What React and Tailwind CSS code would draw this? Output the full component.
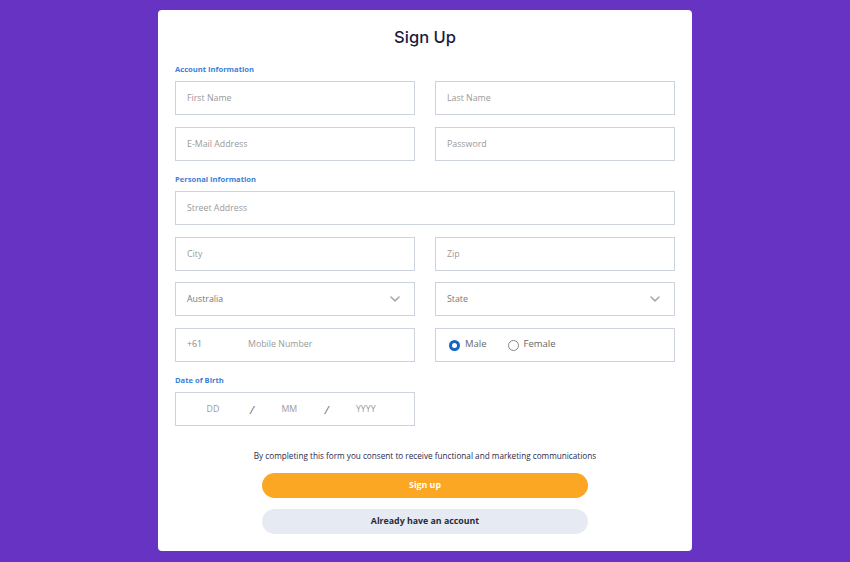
import React from 'react';

const font = { fontFamily: '"Open Sans", "Liberation Sans", sans-serif' };

const Field = ({ placeholder, className = '' }) => (
  <div className={`h-[34px] border border-[#cdd3dc] flex items-center px-[11px] pt-[1px] text-[8.8px] text-[#9a9a9a] ${className}`}>
    {placeholder}
  </div>
);

const Chevron = () => (
  <svg width="10" height="6" viewBox="0 0 10 6" className="mr-[2px]">
    <path d="M1 1 L5 4.8 L9 1" fill="none" stroke="#a5a9b0" strokeWidth="1.6" strokeLinecap="round" strokeLinejoin="round" />
  </svg>
);

const SelectField = ({ value }) => (
  <div className="h-[34px] border border-[#cdd3dc] flex items-center justify-between pl-[11px] pr-[12px] text-[8.8px] text-[#777]">
    <span className="pt-[2px]">{value}</span>
    <Chevron />
  </div>
);

const Label = ({ children, className = '' }) => (
  <div className={`text-[7.6px] font-bold text-[#3a7fd8] leading-[12px] ${className}`}>{children}</div>
);

export default function App() {
  return (
    <div className="min-h-screen bg-[#6733c3] pt-[10px] pb-[11px]" style={font}>
      <div className="w-[534px] mx-auto bg-white rounded-[4px] px-[17px] pt-[15px] pb-[17px]">
        <h1
          className="text-center text-[16.5px] leading-[24px] font-medium text-[#1c1c3c]"
          style={{ fontFamily: 'Inter, "Open Sans", sans-serif' }}
        >
          Sign Up
        </h1>

        <Label className="mt-[14px] mb-[6px]">Account Information</Label>
        <div className="grid grid-cols-2 gap-x-[20px] gap-y-[12px]">
          <Field placeholder="First Name" />
          <Field placeholder="Last Name" />
          <Field placeholder="E-Mail Address" />
          <Field placeholder="Password" />
        </div>

        <Label className="mt-[12px] mb-[6px]">Personal Information</Label>
        <Field placeholder="Street Address" />
        <div className="grid grid-cols-2 gap-x-[20px] mt-[12px]">
          <Field placeholder="City" />
          <Field placeholder="Zip" />
        </div>
        <div className="grid grid-cols-2 gap-x-[20px] mt-[11px]">
          <SelectField value="Australia" />
          <SelectField value="State" />
        </div>
        <div className="grid grid-cols-2 gap-x-[20px] mt-[12px]">
          <div className="h-[34px] border border-[#cdd3dc] flex items-center px-[11px] text-[8.8px] text-[#9a9a9a]">
            <span className="w-[61px] text-[#888]">+61</span>
            <span>Mobile Number</span>
          </div>
          <div className="h-[34px] border border-[#cdd3dc] flex items-center pl-[13px] text-[9.5px] text-[#666]">
            <span className="w-[11px] h-[11px] rounded-full border-[3px] border-[#1565c0] bg-white" />
            <span className="ml-[5px] -mt-[2px]">Male</span>
            <span className="ml-[21px] w-[11px] h-[11px] rounded-full border border-[#888] bg-white" />
            <span className="ml-[5px] -mt-[2px]">Female</span>
          </div>
        </div>

        <Label className="mt-[12px] mb-[6px]">Date of Birth</Label>
        <div className="grid grid-cols-2 gap-x-[20px]">
          <div className="h-[34px] border border-[#cdd3dc] flex items-center pt-[2px] text-[8.8px] text-[#9a9a9a]">
            <span className="w-[74px] text-center">DD</span>
            <span className="text-[11px] text-[#666] italic">/</span>
            <span className="w-[71px] text-center">MM</span>
            <span className="text-[11px] text-[#666] italic">/</span>
            <span className="w-[74px] text-center">YYYY</span>
          </div>
        </div>

        <p className="mt-[24px] text-center text-[8.2px] leading-[12px] text-[#2a2a4a]">
          By completing this form you consent to receive functional and marketing communications
        </p>
        <div className="w-[326px] mx-auto">
          <button className="mt-[11px] w-full h-[25px] rounded-full bg-[#fba724] text-white text-[8.8px] font-bold">
            Sign up
          </button>
          <button className="mt-[11px] w-full h-[25px] rounded-full bg-[#e6ebf3] text-[#2a2a3a] text-[8.8px] font-bold">
            Already have an account
          </button>
        </div>
      </div>
    </div>
  );
}
